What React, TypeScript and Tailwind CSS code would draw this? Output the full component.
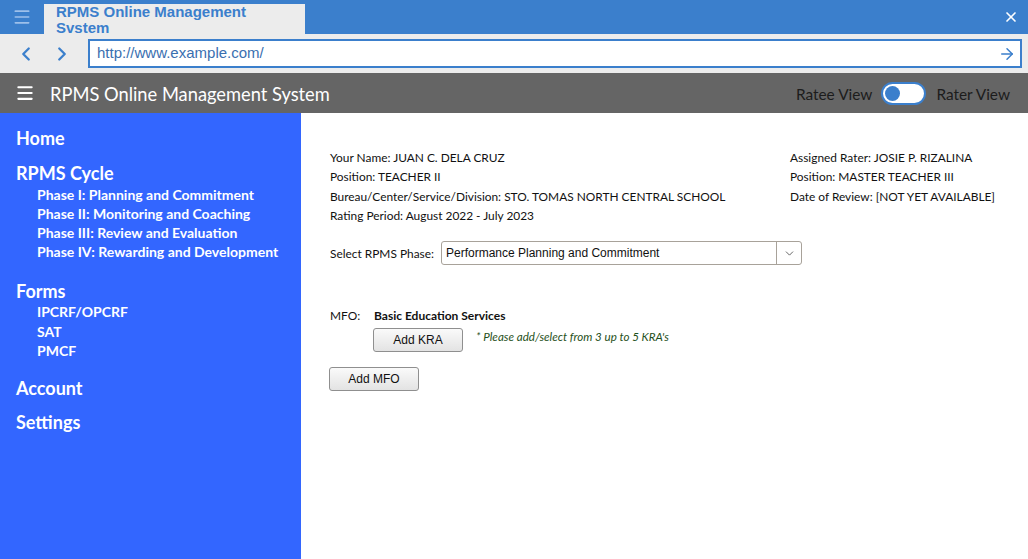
import { ChevronLeft, ChevronRight, ArrowRight, X, Menu, ChevronDown } from "lucide-react";

const phases = [
  "Phase I: Planning and Commitment",
  "Phase II: Monitoring and Coaching",
  "Phase III: Review and Evaluation",
  "Phase IV: Rewarding and Development",
];

const forms = ["IPCRF/OPCRF", "SAT", "PMCF"];

function BrowserChrome() {
  return (
    <div className="font-['Liberation_Sans',Arial,sans-serif]">
      <div className="flex h-[34px] items-end bg-[#3b7fcc]">
        <div className="flex h-[34px] w-[44px] items-center justify-center">
          <Menu className="h-[20px] w-[20px] text-[#9dc0ea]" strokeWidth={2} />
        </div>
        <div className="h-[30px] w-[261px] overflow-hidden bg-[#ececec] pl-[12px]">
          <div className="w-[205px] text-[15px] font-bold leading-[16px] text-[#3b7fcc]">
            RPMS Online Management Svstem
          </div>
        </div>
        <div className="flex-1" />
        <div className="flex h-[34px] w-[34px] items-center justify-center">
          <X className="h-[16px] w-[16px] text-white" strokeWidth={2.5} />
        </div>
      </div>
      <div className="flex h-[39px] items-center bg-[#ececec] pr-[6px]">
        <div className="flex w-[88px] items-center">
          <ChevronLeft className="ml-[15px] h-[22px] w-[22px] text-[#3b7fcc]" strokeWidth={2.5} />
          <ChevronRight className="ml-[14px] h-[22px] w-[22px] text-[#3b7fcc]" strokeWidth={2.5} />
        </div>
        <div className="flex h-[29px] flex-1 items-center border-2 border-[#3b7fcc] bg-white pl-[7px] pr-[4px]">
          <span className="flex-1 text-[15px] text-[#3a6fb0]">http://www.example.com/</span>
          <ArrowRight className="h-[18px] w-[18px] text-[#3b7fcc]" strokeWidth={2} />
        </div>
      </div>
    </div>
  );
}

function Toggle() {
  return (
    <div className="flex h-[23px] w-[45px] items-center rounded-full border-2 border-[#3b7fcc] bg-white pl-[2px]">
      <div className="h-[15px] w-[15px] rounded-full bg-[#3b7fcc]" />
    </div>
  );
}

function AppHeader() {
  return (
    <div className="flex h-[40px] items-center bg-[#656565] pl-[15px] pr-[18px]">
      <Menu className="h-[20px] w-[20px] text-white" strokeWidth={2.5} />
      <span className="ml-[15px] mt-[3px] flex-1 text-[18.3px] text-white">RPMS Online Management System</span>
      <span className="mt-[3px] text-[15.4px] text-[#1c1c1c]">Ratee View</span>
      <div className="ml-[9px] mr-[10px]">
        <Toggle />
      </div>
      <span className="mt-[3px] text-[15.4px] text-[#1c1c1c]">Rater View</span>
    </div>
  );
}

function Sidebar() {
  return (
    <aside className="w-[301px] shrink-0 bg-[#3366ff] pl-[16px] pt-[14px] font-bold text-white">
      <div className="text-[18px] leading-[22px]">Home</div>
      <div className="mt-[13px] text-[18px] leading-[22px]">RPMS Cycle</div>
      <ul className="mt-[1px] pl-[21px] text-[14px] leading-[19px]">
        {phases.map((p) => (
          <li key={p}>{p}</li>
        ))}
      </ul>
      <div className="mt-[19px] text-[18px] leading-[22px]">Forms</div>
      <ul className="pl-[21px] text-[14px] leading-[19.5px]">
        {forms.map((f) => (
          <li key={f}>{f}</li>
        ))}
      </ul>
      <div className="mt-[16px] text-[18px] leading-[22px]">Account</div>
      <div className="mt-[12px] text-[18px] leading-[22px]">Settings</div>
    </aside>
  );
}

function OldButton({ children }: { children: string }) {
  return (
    <button className="h-[24px] w-[90px] rounded-[3px] border border-[#8f8f8f] bg-gradient-to-b from-[#fafafa] to-[#e3e3e3] font-['Liberation_Sans',Arial,sans-serif] text-[12px] text-[#111]">
      {children}
    </button>
  );
}

function Content() {
  return (
    <main className="flex-1 bg-white pl-[29px] pr-[33px] pt-[35px] text-[11.9px] text-[#111]">
      <div className="flex justify-between leading-[19.3px]">
        <div>
          <div>Your Name: JUAN C. DELA CRUZ</div>
          <div>Position: TEACHER II</div>
          <div>Bureau/Center/Service/Division: STO. TOMAS NORTH CENTRAL SCHOOL</div>
          <div>Rating Period: August 2022 - July 2023</div>
        </div>
        <div>
          <div>Assigned Rater: JOSIE P. RIZALINA</div>
          <div>Position: MASTER TEACHER III</div>
          <div>Date of Review: [NOT YET AVAILABLE]</div>
        </div>
      </div>
      <div className="mt-[16px] flex items-center">
        <span className="w-[111px] pt-[1px]">Select RPMS Phase:</span>
        <div className="flex h-[24px] w-[361px] items-center rounded-[3px] border border-[#a8a29a] bg-white font-['Liberation_Sans',Arial,sans-serif] text-[12px]">
          <span className="flex-1 pl-[4px]">Performance Planning and Commitment</span>
          <div className="flex h-full w-[25px] items-center justify-center border-l border-[#a8a29a]">
            <ChevronDown className="h-[13px] w-[13px] text-[#444]" strokeWidth={1.5} />
          </div>
        </div>
      </div>
      <div className="mt-[42px] flex items-center">
        <span className="w-[44px]">MFO:</span>
        <span className="text-[12px] font-bold">Basic Education Services</span>
      </div>
      <div className="mt-[3px] flex items-center pl-[43px]">
        <OldButton>Add KRA</OldButton>
        <span className="ml-[13px] -mt-[6px] text-[11.6px] italic text-[#1f5020]">* Please add/select from 3 up to 5 KRA's</span>
      </div>
      <div className="mt-[15px] -ml-[1px]">
        <OldButton>Add MFO</OldButton>
      </div>
    </main>
  );
}

export default function App() {
  return (
    <div className="flex h-[559px] w-[1028px] flex-col overflow-hidden font-['Lato','Noto_Sans',sans-serif]">
      <BrowserChrome />
      <AppHeader />
      <div className="flex flex-1">
        <Sidebar />
        <Content />
      </div>
    </div>
  );
}
